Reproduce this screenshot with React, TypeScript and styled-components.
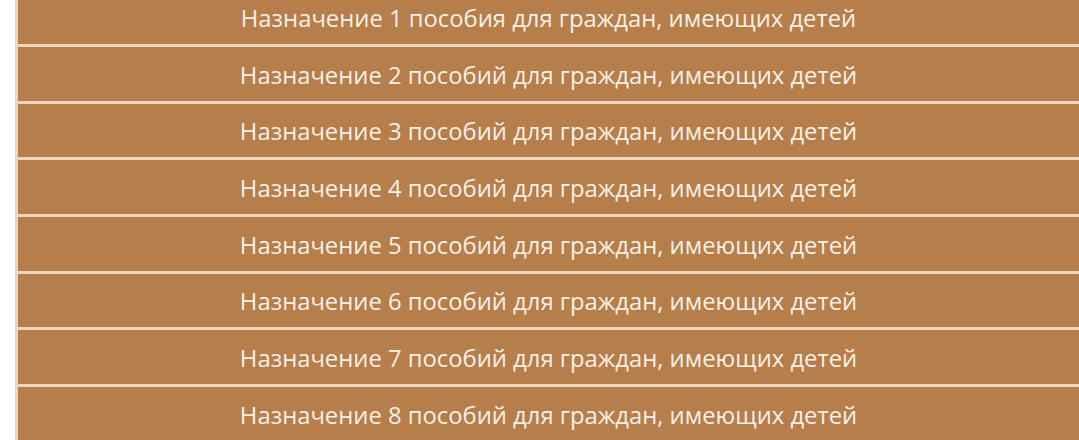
import React from "react";
import styled, { createGlobalStyle } from "styled-components";

const Global = createGlobalStyle`
  html, body { margin: 0; padding: 0; background: #ffffff; overflow: hidden; }
  body { font-family: "Open Sans", "Noto Sans", sans-serif; }
`;

const Page = styled.div`
  padding-left: 15px;
  margin-top: -9.7px;
`;

const List = styled.ul`
  list-style: none;
  margin: 0;
  padding: 0;
  border-left: 3px solid #e9d4bd;
  display: flex;
  flex-direction: column;
`;

const Item = styled.li`
  box-sizing: content-box;
  height: 51.67px;
  padding-top: 2px;
  border-bottom: 3px solid #e9d4bd;
  background: #b57e4a;
  color: #f8f0e6;
  display: flex;
  align-items: center;
  justify-content: center;
  font-size: 23.8px;
  letter-spacing: 0;
`;

const items = [
  "Назначение 1 пособия для граждан, имеющих детей",
  "Назначение 2 пособий для граждан, имеющих детей",
  "Назначение 3 пособий для граждан, имеющих детей",
  "Назначение 4 пособий для граждан, имеющих детей",
  "Назначение 5 пособий для граждан, имеющих детей",
  "Назначение 6 пособий для граждан, имеющих детей",
  "Назначение 7 пособий для граждан, имеющих детей",
  "Назначение 8 пособий для граждан, имеющих детей",
];

export default function App() {
  return (
    <>
      <Global />
      <Page>
        <List>
          {items.map((t) => (
            <Item key={t}>{t}</Item>
          ))}
        </List>
      </Page>
    </>
  );
}
